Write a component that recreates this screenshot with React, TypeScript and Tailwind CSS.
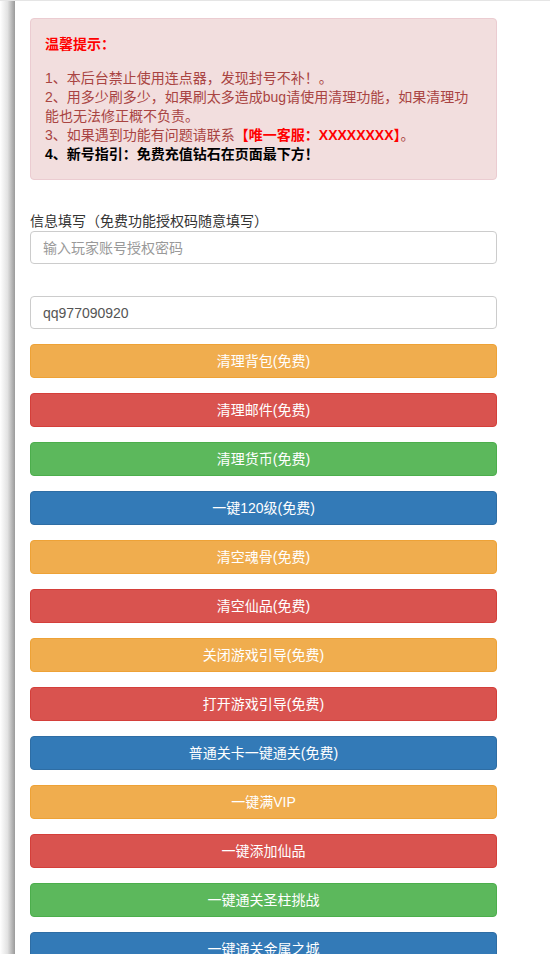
import React from "react";

const tones: Record<string, string> = {
  warning: "bg-[#f0ad4e] border-[#eea236]",
  danger: "bg-[#d9534f] border-[#d43f3a]",
  success: "bg-[#5cb85c] border-[#4cae4c]",
  primary: "bg-[#337ab7] border-[#2e6da4]",
};

const actions = [
  { label: "清理背包(免费)", tone: "warning" },
  { label: "清理邮件(免费)", tone: "danger" },
  { label: "清理货币(免费)", tone: "success" },
  { label: "一键120级(免费)", tone: "primary" },
  { label: "清空魂骨(免费)", tone: "warning" },
  { label: "清空仙品(免费)", tone: "danger" },
  { label: "关闭游戏引导(免费)", tone: "warning" },
  { label: "打开游戏引导(免费)", tone: "danger" },
  { label: "普通关卡一键通关(免费)", tone: "primary" },
  { label: "一键满VIP", tone: "warning" },
  { label: "一键添加仙品", tone: "danger" },
  { label: "一键通关圣柱挑战", tone: "success" },
  { label: "一键通关金属之城", tone: "primary" },
  { label: "一键通关星斗森林", tone: "warning" },
  { label: "免费充值钻石", tone: "danger" },
];

export default function App() {
  return (
    <div
      className="flex min-h-screen border-t border-[#e5e5e5] bg-white text-[14px] text-[#333]"
      style={{ fontFamily: '"Liberation Sans", Arial, "Noto Sans CJK SC", sans-serif' }}
    >
      {/* shadow strip on the left */}
      <div className="w-[15px] shrink-0 bg-gradient-to-r from-white via-[#e2e2e2] to-[#9a9a9a]" />

      <div className="w-[497px] px-[15px] pt-[17px]">
        <div className="rounded-[4px] border border-[#ebccd1] bg-[#f2dede] px-[14px] pt-[14px] pb-[15px] leading-[19px] text-[#a94442]">
          <div className="pt-[2px] font-bold text-[#f00]">温馨提示：</div>
          <div className="mt-[15px]">
            <div>1、本后台禁止使用连点器，发现封号不补！。</div>
            <div>2、用多少刷多少，如果刷太多造成bug请使用清理功能，如果清理功能也无法修正概不负责。</div>
            <div>
              3、如果遇到功能有问题请联系<b className="text-[#f00]">【唯一客服：XXXXXXXX】</b>。
            </div>
            <div className="font-bold text-black">4、新号指引：免费充值钻石在页面最下方！</div>
          </div>
        </div>

        <div className="mt-[32px] leading-[19px]">信息填写（免费功能授权码随意填写）</div>
        <input
          className="block h-[33px] w-full rounded-[4px] border border-[#ccc] px-[12px] text-[14px] text-[#555] placeholder:text-[#999] outline-none"
          placeholder="输入玩家账号授权密码"
        />
        <input
          className="mt-[32px] block h-[33px] w-full rounded-[4px] border border-[#ccc] px-[12px] text-[14px] text-[#555] placeholder:text-[#999] outline-none"
          defaultValue="qq977090920"
        />

        <div className="mt-[15px] flex flex-col gap-[15px] pb-[20px]">
          {actions.map((a) => (
            <button
              key={a.label}
              className={`h-[34px] w-full rounded-[4px] border text-[14px] text-white ${tones[a.tone]}`}
            >
              {a.label}
            </button>
          ))}
        </div>
      </div>
    </div>
  );
}
